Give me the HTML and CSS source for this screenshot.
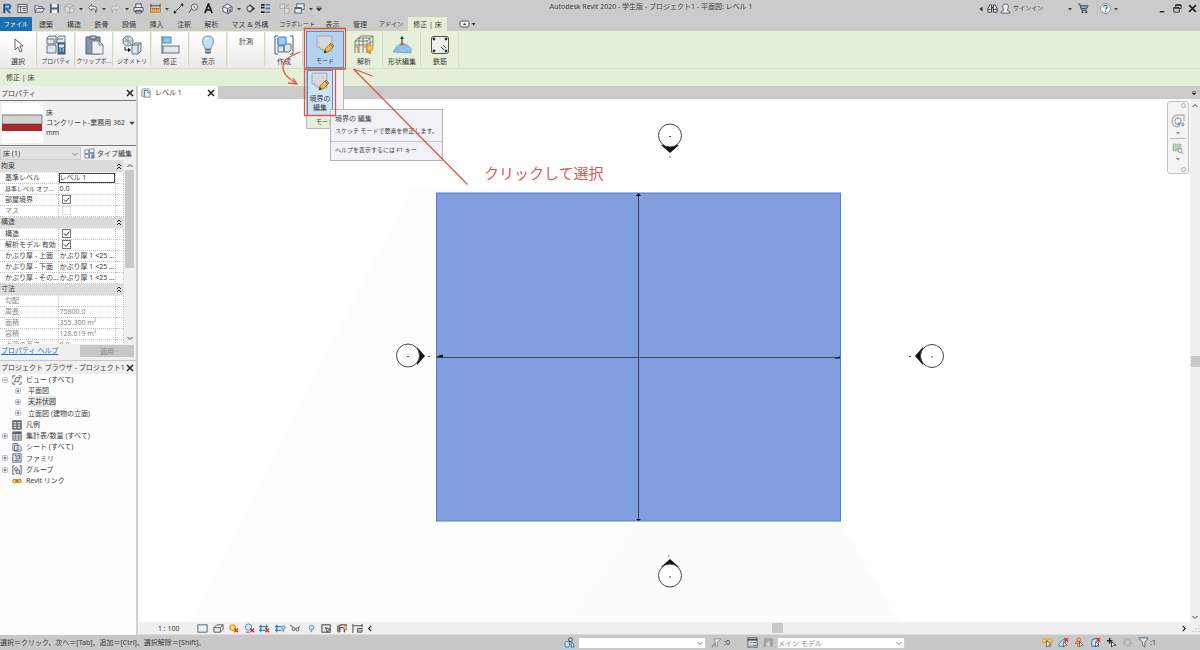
FILE: index.html
```html
<!DOCTYPE html>
<html lang="ja">
<head>
<meta charset="utf-8">
<title>Autodesk Revit 2020 - プロジェクト1</title>
<link rel="stylesheet" href="styles.css">
</head>
<body>
<svg class="sprite" aria-hidden="true">
  <symbol id="caret" viewBox="0 0 6 6"><path d="M1 2h4L3 4.500z" fill="#444"/></symbol>
  <symbol id="close" viewBox="0 0 8 8"><path d="M1 1l6 6M7 1L1 7" stroke="#222" stroke-width="1.500" fill="none"/></symbol>
  <symbol id="chev" viewBox="0 0 8 8"><path d="M1.500 3L4 5.500 6.500 3" stroke="#777" fill="none"/></symbol>
  <symbol id="dbl" viewBox="0 0 6 8"><path d="M1 4l2-2 2 2M1 7l2-2 2 2" stroke="#222" stroke-width="1" fill="none"/></symbol>
  <symbol id="sketch" viewBox="0 0 20 20"><path d="M2 1h15v15H8v-2H5v-2H2z" fill="#d4d7db" stroke="#9a9fa6" stroke-width=".8"/><path d="M9 18l1-4 6-6 3 3-6 6z" fill="#f5b941" stroke="#765c35" stroke-width=".7"/><path d="M9 18l1-3 2 2z" fill="#333"/><path d="M15 9l3 3" stroke="#d9653c" stroke-width="1.500"/></symbol>
  <symbol id="views" viewBox="0 0 12 12"><path d="M1 3q0-2 2-2h3v2H4v7H1zM4 3h4l3 3v5H4zM7 1h2l2 2v2" fill="#eef3f7" stroke="#617386" stroke-width=".9"/><path d="M8 3v3h3" stroke="#617386" fill="none" stroke-width=".9"/></symbol>
  <symbol id="types" viewBox="0 0 12 12"><path d="M1 2h4v4H1zM6 1h5v4H6zM1 7h4v4H1zM6 6h5v5H6z" fill="#eef3f7" stroke="#617386" stroke-width=".8"/><path d="M8 7h3v4H8z" fill="#4b91cc"/></symbol>
  <symbol id="redx" viewBox="0 0 6 6"><path d="M1 1l4 4M5 1L1 5" stroke="#df3529" stroke-width="1.600"/></symbol>
  <symbol id="plus" viewBox="0 0 6 6"><rect x=".5" y=".5" width="5" height="5" rx="1" fill="#f4f6f8" stroke="#a3a9b0" stroke-width=".7"/><path d="M1.500 3h3M3 1.500v3" stroke="#3c5d91" stroke-width=".8"/></symbol>
  <symbol id="minus" viewBox="0 0 6 6"><rect x=".5" y=".5" width="5" height="5" rx="1" fill="#f4f6f8" stroke="#a3a9b0" stroke-width=".7"/><path d="M1.500 3h3" stroke="#3c5d91" stroke-width=".8"/></symbol>
</svg>

<header class="titlebar">
  <nav class="quick" aria-label="クイック アクセス">
    <button class="qi" aria-label="Revit"><svg viewBox="0 0 12 12"><path d="M1.500 1h2v10h-2z" fill="#153f75"/><path d="M3 2h4a2 2 0 0 1 0 4H4l5 5" stroke="#2473b8" stroke-width="2.200" fill="none"/></svg></button>
    <button class="qi" aria-label="ホーム"><svg viewBox="0 0 12 12"><rect x="1" y="1.500" width="10" height="9" fill="#eee" stroke="#4b5967"/><path d="M1 4h10M4 4v6M6 6h4M6 8h4" stroke="#4b5967"/></svg></button>
    <button class="qi gap-s" aria-label="開く"><svg viewBox="0 0 12 12"><path d="M1 10V3h3l1 1h4v2M1 10l2-4h8.500L9 10z" fill="#e4e7ea" stroke="#4b5967"/></svg></button>
    <button class="qi" aria-label="保存"><svg viewBox="0 0 12 12"><path d="M1 1h9l1 1v9H1z" fill="#536170"/><path d="M3 1h6v4H3zM3 7h6v4H3z" fill="#eee"/></svg></button>
    <button class="qi" aria-label="同期"><svg viewBox="0 0 12 12"><path d="M1 3l5-2 5 2v6l-5 2-5-2zM1 3l5 2 5-2M6 5v6" fill="#ddd" stroke="#aaa"/><circle cx="8.500" cy="8" r="2.500" fill="#ddd" stroke="#aaa"/></svg></button>
    <button class="qc" aria-label="同期メニュー"><svg><use href="#caret"/></svg></button>
    <button class="qi" aria-label="元に戻す"><svg viewBox="0 0 12 12"><path d="M5 1.500L1.500 5 5 8.500V6.500h3q2 0 1.500 4 3-6-1.500-7H5z" fill="#eee" stroke="#4b5967" stroke-width=".9"/></svg></button>
    <button class="qc" aria-label="履歴"><svg><use href="#caret"/></svg></button>
    <button class="qi" aria-label="やり直し"><svg viewBox="0 0 12 12"><path d="M7 1.500L10.500 5 7 8.500V6.500H4q-2 0-1.500 4-3-6 1.500-7h3z" fill="#ddd" stroke="#aaa" stroke-width=".9"/></svg></button>
    <button class="qc" aria-label="やり直し履歴"><svg><use href="#caret"/></svg></button>
    <button class="qi" aria-label="印刷"><svg viewBox="0 0 12 12"><path d="M3 5V1h6v4M1 5h10v4H1zM3 8h6v3H3z" fill="#eee" stroke="#404c58"/></svg></button>
    <button class="qi gap-s" aria-label="計測"><svg viewBox="0 0 12 12"><path d="M1 1v4M11 1v4M1 3h10" stroke="#444"/><path d="M.5 6h11v4H.5z" fill="#f3b94a" stroke="#b3762b"/><path d="M3 6v2M5 6v2M7 6v2M9 6v2" stroke="#d6402d" stroke-width=".7"/></svg></button>
    <button class="qc" aria-label="計測メニュー"><svg><use href="#caret"/></svg></button>
    <button class="qi" aria-label="寸法"><svg viewBox="0 0 12 12"><path d="M2 10l8-8" stroke="#333"/><path d="M1 9l2 2M9 1l2 2" stroke="#333" stroke-width="2.500"/></svg></button>
    <button class="qi" aria-label="タグ"><svg viewBox="0 0 12 12"><circle cx="7" cy="4.500" r="3.500" fill="#e8e8e8" stroke="#555"/><path d="M4 6l-3 5M6 3l2 3" stroke="#555"/></svg></button>
    <button class="qi" aria-label="文字"><svg viewBox="0 0 12 12"><path d="M2 11L6 1l4 10M3.500 7.500h5" stroke="#222" stroke-width="1.900" fill="none"/></svg></button>
    <button class="qi gap-m" aria-label="3D ビュー"><svg viewBox="0 0 12 12"><path d="M1 4l5-3 5 3v5l-5 2.500L1 9z" fill="#eee" stroke="#4b5967"/><path d="M1 4l5 2 5-2M6 6v5" stroke="#4b5967" fill="none"/><path d="M7 7l3-1v3l-3 1z" fill="#777"/></svg></button>
    <button class="qc" aria-label="3D メニュー"><svg><use href="#caret"/></svg></button>
    <button class="qi" aria-label="断面"><svg viewBox="0 0 12 12"><path d="M5 1l6 5-6 5z" fill="#333"/><circle cx="5" cy="6" r="3" fill="#ddd" stroke="#333"/></svg></button>
    <button class="qi" aria-label="細線"><svg viewBox="0 0 12 12"><path d="M1 2h4M1 5h4M1 10h4" stroke="#222" stroke-width="2"/><path d="M6 2h5M6 10h5" stroke="#333"/><path d="M6 6h5" stroke="#3184c5" stroke-width="2"/></svg></button>
    <button class="qi gap-m" aria-label="非表示を閉じる"><svg viewBox="0 0 12 12"><path d="M1 1h5v5H1zM6 6h5v5H6z" fill="#ddd" stroke="#aaa"/><path d="M7 1l4 4M11 1L7 5" stroke="#aaa"/></svg></button>
    <button class="qi" aria-label="切り替え"><svg viewBox="0 0 12 12"><rect x="3" y="1" width="8" height="6" fill="#eee" stroke="#4b5967"/><rect x="1" y="5" width="7" height="6" fill="#eee" stroke="#4b5967"/><path d="M1 6h7" stroke="#4b5967"/></svg></button>
    <button class="qc" aria-label="ウィンドウ"><svg><use href="#caret"/></svg></button>
    <button class="qc" aria-label="カスタマイズ"><svg viewBox="0 0 6 6"><path d="M.5 1h5M.5 2.500h5L3 5z" fill="#333" stroke="#333" stroke-width=".6"/></svg></button>
  </nav>
  <h1 class="title">Autodesk Revit 2020 - 学生版 - プロジェクト1 - 平面図: レベル 1</h1>
  <div class="account">
    <button class="qc" aria-label="折りたたむ"><svg viewBox="0 0 6 6"><path d="M4.500.5v5L1.500 3z" fill="#333"/></svg></button>
    <button class="qi" aria-label="検索"><svg viewBox="0 0 12 12"><path d="M1 10V6l2-4h2v8zM7 10V2h2l2 4v4z" fill="#eee" stroke="#333"/><path d="M5 5h2M1 7h4M7 7h4" stroke="#333"/></svg></button>
    <button class="signin"><svg viewBox="0 0 12 12"><path d="M1 11q0-2 3-3-3-7 2-7t2 7q3 1 3 3z" fill="#eee" stroke="#4b5967"/></svg>サインイン</button>
    <button class="qc" aria-label="アカウント"><svg><use href="#caret"/></svg></button>
    <button class="qi cart" aria-label="ストア"><svg viewBox="0 0 12 12"><path d="M0 1h2l2 7h6M2.500 3h8.500L9.500 6h-6z" fill="#8aa6bf" stroke="#314c68"/><circle cx="5" cy="10" r="1"/><circle cx="9" cy="10" r="1"/></svg></button>
    <button class="qi help" aria-label="ヘルプ"><svg viewBox="0 0 12 12"><circle cx="6" cy="6" r="5.300" fill="#fff" stroke="#526577" stroke-width=".8"/><path d="M4 4.500q0-2 2-2t2 1.700T6 7" stroke="#2467c4" stroke-width="1.400" fill="none"/><circle cx="6" cy="9" r=".8" fill="#2467c4"/></svg></button>
    <button class="qc" aria-label="ヘルプ メニュー"><svg><use href="#caret"/></svg></button>
    <div class="winbtns">
      <button class="qi" aria-label="最小化"><svg viewBox="0 0 12 12"><path d="M3 9.500h5" stroke="#222" stroke-width="1.500"/></svg></button>
      <button class="qi" aria-label="元のサイズ"><svg viewBox="0 0 12 12"><path d="M4 4.500V2h6v4H8M2 5h6v5H2z" fill="none" stroke="#333"/><path d="M4 2.500h6M2 5.500h6" stroke="#333" stroke-width="1.500"/></svg></button>
      <button class="qi" aria-label="閉じる"><svg><use href="#close"/></svg></button>
    </div>
  </div>
</header>

<nav class="tabs" aria-label="リボン タブ">
  <button class="tab file kana">ファイル</button>
  <button class="tab">建築</button><button class="tab">構造</button><button class="tab">鉄骨</button><button class="tab">設備</button><button class="tab">挿入</button><button class="tab">注釈</button><button class="tab">解析</button><button class="tab">マス &amp; 外構</button><button class="tab kana">コラボレート</button><button class="tab">表示</button><button class="tab">管理</button><button class="tab kana">アドイン</button><button class="tab active">修正 | 床</button>
  <button class="tab" aria-label="リボン表示"><svg class="ribmin" viewBox="0 0 18 8"><rect x="1" y="1" width="9" height="6" rx="1.500" fill="#eee" stroke="#555"/><path d="M4 5l1.500-2L7 5z" fill="#333"/><path d="M12.500 3h4l-2 2.500z" fill="#333"/></svg></button>
</nav>

<section class="ribbon" aria-label="リボン">
  <button class="panel"><svg viewBox="0 0 20 20"><path d="M7 4v11l3-3 2 5 2-1-2-5h3z" fill="#fff" stroke="#555" stroke-width=".9"/></svg><span>選択</span></button>
  <button class="panel"><svg viewBox="0 0 20 20"><path d="M1 3l2-2h7v8H1zM11 3l2-2h6v7h-8zM1 11l2-1h7v8H1z" fill="#dfe7ee" stroke="#667684"/><path d="M1 4h7v5M11 4h6" stroke="#667684" fill="none"/><rect x="12" y="8" width="7" height="11" fill="#3c6ba0" stroke="#456"/><path d="M13.500 10h4v2h-4zM13.500 14h1.500M16.500 14H18M13.500 16H15M16.500 16H18" fill="#dbe9f5" stroke="#dbe9f5"/></svg><span class="kana">プロパティ</span></button>
  <button class="panel"><svg viewBox="0 0 20 20"><path d="M2 2h14v17H2z" fill="#8796a4" stroke="#536170"/><path d="M6 1h6v3H6z" fill="#bcc5ce" stroke="#536170"/><path d="M8 6h7l4 4v9H8z" fill="#eef1f4" stroke="#717e8b"/><path d="M15 6v4h4" fill="none" stroke="#717e8b"/></svg><span class="kana">クリップボ...</span></button>
  <button class="panel"><svg viewBox="0 0 20 20"><circle cx="6" cy="6" r="5" fill="#d9dfe5" stroke="#687885"/><path d="M1 6h9M6 1v9M3 3l6 6" stroke="#8998a5"/><path d="M10 10l3-2h6v8l-3 3h-6z" fill="#dce5ed" stroke="#657686"/><path d="M10 10h6v9M16 10l3-2" fill="none" stroke="#657686"/><path d="M3 12v3h4" fill="none" stroke="#222"/><path d="M6 13l3 2-3 2z"/></svg><span class="kana">ジオメトリ</span></button>
  <button class="panel"><svg viewBox="0 0 20 20"><path d="M2 1v18" stroke="#53616e"/><rect x="3" y="2" width="8" height="6" fill="#91c8ef" stroke="#418bc4"/><rect x="3" y="11" width="16" height="7" fill="#e5e7ea" stroke="#687580"/></svg><span>修正</span></button>
  <button class="panel"><svg viewBox="0 0 20 20"><path d="M7 14q0-3-2-5-2-8 5-8t5 8q-2 2-2 5z" fill="#c3def2" stroke="#7393ac"/><path d="M7 14h6v4l-3 1-3-1z" fill="#667480"/><path d="M7 16h6" stroke="#dce2e7"/><path d="M7 6q1-3 4-3" stroke="#fff" fill="none"/></svg><span>表示</span></button>
  <button class="panel plain"><span>計測</span></button>
  <button class="panel"><svg viewBox="0 0 20 20"><path d="M4 1H1v18h3M16 1h3v18h-3" fill="none" stroke="#4d5b68"/><path d="M4 3h7v7H4zM4 11h6v6H4zM10 11l2-2h5v6l-2 2h-5z" fill="#dbe4eb" stroke="#627588"/><path d="M4 3l1-1h7v7l-1 1H4z" fill="#9dcdf0" stroke="#3b86bf"/></svg><span>作成</span></button>
  <div class="mode">
    <button class="panel open" aria-expanded="true"><svg><use href="#sketch"/></svg><span class="kana">モード</span></button>
    <div class="flyout">
      <button class="edit"><svg><use href="#sketch"/></svg><span>境界の<br>編集</span></button>
      <div class="flyname kana">モード</div>
    </div>
    <div class="tooltip" role="tooltip">
      <b>境界の 編集</b>
      <p>スケッチ モードで要素を修正します。</p>
      <p class="f1">ヘルプを表示するには F1 キー</p>
    </div>
  </div>
  <button class="panel green"><svg viewBox="0 0 20 20"><path d="M1 6l6-5h12v10l-5 7M1 6h12l6-5M1 6v12M13 6v12M1 10h12l6-4M5 3v15M9 3v15M16 4v10M4 3h12" fill="none" stroke="#666" stroke-width=".8"/><path d="M1 12h3v6M9 12h4v6" stroke="#e16a50" fill="none"/><circle cx="16" cy="13" r="3" fill="#f6c945" stroke="#dd9c28"/><path d="M15 16h2v3h-2z" fill="#c69336"/></svg><span>解析</span></button>
  <button class="panel green"><svg viewBox="0 0 20 20"><path d="M1 17l4-6 5-3 5 2 4 3v5z" fill="#8bbce5" stroke="#6fa6d8" stroke-width=".8"/><path d="M5 11l5 5 9-3M10 8v8" stroke="#b7d8f2" fill="none" stroke-width=".8"/><path d="M10 2v6" stroke="#333"/><path d="M8 4l2-3 2 3z" fill="#333"/><circle cx="10" cy="9" r="1.500" fill="#e34d3c"/></svg><span>形状編集</span></button>
  <button class="panel green"><svg viewBox="0 0 20 20"><rect x="1.500" y="1.500" width="17" height="17" rx="2" fill="#eef2e9" stroke="#555"/><g fill="#333"><circle cx="4" cy="4" r="1.400"/><circle cx="16" cy="4" r="1.400"/><circle cx="4" cy="16" r="1.400"/><circle cx="16" cy="16" r="1.400"/></g><path d="M11 12l3 3M13 10l3 3" stroke="#444"/></svg><span>鉄筋</span></button>
</section>
<div class="options">修正 | 床</div>

<main class="work">
  <aside class="side">
    <section class="props">
      <header class="palhead"><h2>プロパティ</h2><button aria-label="プロパティを閉じる"><svg><use href="#close"/></svg></button></header>
      <button class="type">
        <svg class="swatch" viewBox="0 0 42 40" preserveAspectRatio="none"><path d="M0 0h42v40H0z" fill="#fff"/><path d="M0 12h41v9H0z" fill="#d3d5d5" stroke="#777"/><path d="M0 21h41v7H0z" fill="#a52928"/></svg>
        <span class="typename">床<br>コンクリート-業務用 362<br>mm</span>
        <svg class="car"><use href="#caret"/></svg>
      </button>
      <div class="filter">
        <label class="sel grow"><select aria-label="要素"><option>床 (1)</option></select><svg><use href="#chev"/></svg></label>
        <button class="edittype"><svg><use href="#types"/></svg>タイプ編集</button>
      </div>
      <div class="gridwrap">
        <table class="grid">
          <colgroup><col class="c1"><col><col class="c3"></colgroup>
          <tr class="grp"><th colspan="2">拘束</th><td><svg><use href="#dbl"/></svg></td></tr>
          <tr><th>基準レベル</th><td class="editing"><input class="edit-in" type="text" value="レベル 1" aria-label="基準レベル"></td><td></td></tr>
          <tr><th class="kana">基準レベル オフ...</th><td>0.0</td><td></td></tr>
          <tr><th><label for="room">部屋境界</label></th><td><input id="room" type="checkbox" checked></td><td></td></tr>
          <tr class="dim"><th><label for="mass">マス</label></th><td><input id="mass" type="checkbox" disabled></td><td></td></tr>
          <tr class="grp"><th colspan="2">構造</th><td><svg><use href="#dbl"/></svg></td></tr>
          <tr><th><label for="str">構造</label></th><td><input id="str" type="checkbox" checked></td><td></td></tr>
          <tr><th><label for="ana">解析モデル 有効</label></th><td><input id="ana" type="checkbox" checked></td><td></td></tr>
          <tr><th>かぶり厚 - 上面</th><td>かぶり厚 1 &lt;25 ...</td><td></td></tr>
          <tr><th>かぶり厚 - 下面</th><td>かぶり厚 1 &lt;25 ...</td><td></td></tr>
          <tr><th>かぶり厚 - その...</th><td>かぶり厚 1 &lt;25 ...</td><td></td></tr>
          <tr class="grp"><th colspan="2">寸法</th><td><svg><use href="#dbl"/></svg></td></tr>
          <tr class="dim"><th>勾配</th><td></td><td></td></tr>
          <tr class="dim"><th>周長</th><td>75800.0</td><td></td></tr>
          <tr class="dim"><th>面積</th><td>355.300 m²</td><td></td></tr>
          <tr class="dim"><th>容積</th><td>128.619 m³</td><td></td></tr>
          <tr class="dim"><th>上部の高さ</th><td>0.0</td><td></td></tr>
        </table>
        <div class="vscroll"><svg class="up"><use href="#chev"/></svg><i></i><svg><use href="#chev"/></svg></div>
      </div>
      <footer class="apply"><a href="#help">プロパティ ヘルプ</a><button disabled>適用</button></footer>
    </section>
    <section class="browser">
      <header class="palhead"><h2>プロジェクト ブラウザ - プロジェクト1</h2><button aria-label="ブラウザを閉じる"><svg><use href="#close"/></svg></button></header>
      <ul class="tree">
        <li><svg class="ex"><use href="#minus"/></svg><svg class="ti" viewBox="0 0 12 12"><path d="M1 4V1h3M8 1h3v3M1 8v3h3M8 11h3V8" stroke="#555" fill="none"/><path d="M5 3h4L8 8H3z" fill="#eee" stroke="#555"/></svg><span>ビュー (すべて)</span></li>
        <li class="sub"><svg class="ex"><use href="#plus"/></svg><span>平面図</span></li>
        <li class="sub"><svg class="ex"><use href="#plus"/></svg><span class="hot">天井伏図</span></li>
        <li class="sub"><svg class="ex"><use href="#plus"/></svg><span>立面図 (建物の立面)</span></li>
        <li><i class="ex"></i><svg class="ti" viewBox="0 0 12 12"><rect x="1" y="1" width="10" height="10" fill="#6b7783" stroke="#444"/><path d="M2 3h3M2 6h3M2 9h3M7 3h3M7 6h3M7 9h3" stroke="#e2e8ed" stroke-width="1.500"/></svg><span>凡例</span></li>
        <li><svg class="ex"><use href="#plus"/></svg><svg class="ti" viewBox="0 0 12 12"><rect x="1" y="1" width="10" height="10" fill="#eee" stroke="#555"/><path d="M1 2.500h10" stroke="#4b6078" stroke-width="2.500"/><path d="M1 6h10M1 8.500h10M4 3v8M8 3v8" stroke="#777"/></svg><span>集計表/数量 (すべて)</span></li>
        <li><i class="ex"></i><svg class="ti" viewBox="0 0 12 12"><path d="M1 2h6v8H1zM3 4h6l2 2v5H3z" fill="#eef1f4" stroke="#536577"/><path d="M5 7h4M5 9h4" stroke="#89a"/></svg><span>シート (すべて)</span></li>
        <li><svg class="ex"><use href="#plus"/></svg><svg class="ti" viewBox="0 0 12 12"><path d="M1 1h10v10H1z" fill="#eee" stroke="#555"/><path d="M3 3h2v4h4V3H7v2M3 9h6" stroke="#355f88" fill="none"/></svg><span>ファミリ</span></li>
        <li><svg class="ex"><use href="#plus"/></svg><svg class="ti" viewBox="0 0 12 12"><path d="M3 1H1v10h2M9 1h2v10H9" fill="none" stroke="#444"/><circle cx="5" cy="5" r="2" fill="#ddd" stroke="#567"/><path d="M5 6h4v4H5z" fill="#ddd" stroke="#567"/></svg><span>グループ</span></li>
        <li><i class="ex"></i><svg class="ti" viewBox="0 0 12 12"><rect x="1" y="4" width="5" height="4" rx="2" fill="#f8d547" stroke="#dc8c18" stroke-width="1.300"/><rect x="6" y="4" width="5" height="4" rx="2" fill="#f8d547" stroke="#dc8c18" stroke-width="1.300"/><path d="M4 6h4" stroke="#a43b20"/></svg><span>Revit リンク</span></li>
      </ul>
    </section>
  </aside>

  <section class="view">
    <div class="doctabs"><div class="doctab"><svg class="di"><use href="#views"/></svg><span>レベル 1</span><button aria-label="ビューを閉じる"><svg><use href="#close"/></svg></button></div><button class="more" aria-label="タブ一覧"><svg viewBox="0 0 6 6"><path d="M1 1.500h4M1 3h4L3 5z" fill="#333" stroke="#333" stroke-width=".5"/></svg></button></div>
    <div class="stage">
      <div class="canvas">
        <svg class="drawing" viewBox="138 99 1052 523" preserveAspectRatio="xMidYMid meet">
          <path d="M410 190h100l210 432H190z" fill="#fdfdfe"/><path d="M640 521h200l60 101H570z" fill="#fcfcfd"/>
          <rect x="436.500" y="193" width="404" height="328" fill="#819fdf" stroke="#557cd2"/>
          <path d="M638.500 194v326M437 357.500h403" stroke="#3c465c"/>
          <path d="M436 356.500l7-2v3zM834 358.500l6-2v2zM636 196l2.500-3 2.500 3zM636 519h5l-2.500 2z" fill="#111"/>
          <g fill="#111"><path d="M661 145h18l-9 8z"/><path d="M417 347v18l8-9z"/><path d="M923 347v18l-8-9z"/><path d="M661 567h18l-9-8z"/></g>
          <g fill="#fff" stroke="#444"><circle cx="670" cy="135.500" r="11.500"/><circle cx="408" cy="355.500" r="11.500"/><circle cx="932" cy="356" r="11.500"/><circle cx="670" cy="575.500" r="11.500"/></g>
          <path d="M669 136.500h2M669 157h1.500M407 356.500h2M428 356.500h2M931 357h2M909 356.500h2M669 577h2M668 556h1.500" stroke="#555"/>
        </svg>
        <div class="navbar">
          <i class="dot"></i>
          <svg class="wheel" viewBox="0 0 16 16"><path d="M14 8V2H8a6 6 0 1 0 0 12" fill="none" stroke="#b0b0b0" stroke-width="1.300"/><circle cx="8" cy="8" r="3" fill="none" stroke="#aaa" stroke-width="1.300"/><path d="M8 10h2v1.500H8V13h2M12 10v3h1q2-1 0-3z" stroke="#5b9bd3" fill="none"/></svg>
          <svg class="nc"><use href="#caret"/></svg><hr>
          <svg class="zoomi" viewBox="0 0 12 12"><path d="M1 1h8v7H1z" fill="#b9cdb0" stroke="#90a387" stroke-dasharray="1"/><circle cx="8" cy="7.500" r="2" fill="#eef" stroke="#899"/><path d="M9.500 9l2 2" stroke="#899"/></svg>
          <svg class="nc"><use href="#caret"/></svg>
          <i class="dot end"></i>
        </div>
      </div>
      <div class="vscroll main"><svg class="up"><use href="#chev"/></svg><i></i><svg><use href="#chev"/></svg></div>
    </div>
    <div class="viewbar">
      <span class="scale">1 : 100</span>
      <button aria-label="詳細"><svg viewBox="0 0 12 12"><rect x="1" y="2" width="10" height="8" fill="#eef2f5" stroke="#4d5f70"/></svg></button>
      <button aria-label="表示スタイル"><svg viewBox="0 0 12 12"><path d="M1 5l3-3h7v5l-3 3H1zM1 5h7v5M8 5l3-3" fill="#eee" stroke="#555"/></svg></button>
      <button aria-label="太陽"><svg viewBox="0 0 12 12"><circle cx="5" cy="5" r="3" fill="#fbe17a" stroke="#e3a226" stroke-width="1.500"/><use href="#redx" x="6" y="5" width="6" height="6"/></svg></button>
      <button aria-label="影"><svg viewBox="0 0 12 12"><circle cx="5" cy="4.500" r="3.500" fill="#d4e6f5" stroke="#418bc4"/><path d="M2 10h4" stroke="#555"/><use href="#redx" x="6" y="5" width="6" height="6"/></svg></button>
      <button aria-label="トリミング"><svg viewBox="0 0 12 12"><path d="M0 4h10M2 2v8M0 8h7M8 2v5" stroke="#3c83ba" stroke-width="1.500"/><use href="#redx" x="6" y="5" width="6" height="6"/></svg></button>
      <button aria-label="トリミング領域"><svg viewBox="0 0 12 12"><path d="M0 4h7M2 2v8M0 8h7" stroke="#3c83ba" stroke-width="1.500"/><circle cx="9" cy="5" r="2" fill="#d4e6f5" stroke="#418bc4"/><path d="M9 7v3" stroke="#555"/></svg></button>
      <button aria-label="一時表示"><svg viewBox="0 0 12 12"><path d="M0 3q2-1 3 2M11 3l-3 3" stroke="#555" fill="none"/><circle cx="4" cy="6.500" r="1.700" fill="#eee" stroke="#555"/><circle cx="8" cy="7" r="1.700" fill="#eee" stroke="#555"/></svg></button>
      <button aria-label="非表示要素"><svg viewBox="0 0 12 12"><circle cx="6" cy="5" r="2.500" fill="#d4e9fb" stroke="#3f92d6"/><path d="M6 8v2" stroke="#3f92d6" stroke-width="1.500"/></svg></button>
      <button aria-label="ビュー プロパティ"><svg viewBox="0 0 12 12"><rect x="1" y="2" width="9" height="8" fill="#eee" stroke="#333"/><path d="M5 5l5 2-2 1-1 2z" fill="#fff" stroke="#333"/></svg></button>
      <button aria-label="解析モデル"><svg viewBox="0 0 12 12"><path d="M1 10V4l3-2h6v6M3 10V5h5v5" fill="none" stroke="#555" stroke-width="1.500"/><circle cx="9" cy="5" r="2" fill="#f2bd3e"/><path d="M2 7v3" stroke="#e34d3c"/></svg></button>
      <button aria-label="拘束"><svg viewBox="0 0 12 12"><path d="M1 1v10M1 3h10M11 1v4" stroke="#444" fill="none"/><path d="M6 6h5v4H6z" fill="#bbb" stroke="#555"/></svg></button>
      <svg class="lt" viewBox="0 0 8 8"><path d="M5.500 1L2.500 4l3 3" stroke="#222" fill="none" stroke-width="1.300"/></svg>
      <div class="hscroll"><i></i></div>
      <svg class="lt" viewBox="0 0 8 8"><path d="M2.500 1l3 3-3 3" stroke="#222" fill="none" stroke-width="1.300"/></svg>
      <svg class="grip" viewBox="0 0 8 8"><path d="M7 1v1M7 4v1M7 7v1M4 4v1M4 7v1M1 7v1" stroke="#aaa"/></svg>
    </div>
  </section>
</main>

<footer class="status">
  <span class="msg">選択＝クリック、次へ＝[Tab]、追加＝[Ctrl]、選択解除＝[Shift]。</span>
  <svg class="si" viewBox="0 0 12 12"><circle cx="7" cy="3" r="2" fill="#ddd" stroke="#333"/><rect x="1" y="5" width="5" height="6" rx="2" fill="#cfe5f7" stroke="#2b78b4"/><path d="M8 5q3 1 3 6H8z" fill="#cfe5f7" stroke="#2b78b4"/></svg>
  <label class="sel combo"><select aria-label="ワークセット"><option></option></select><svg><use href="#chev"/></svg></label>
  <svg class="si" viewBox="0 0 12 12"><path d="M3 2h8L7 6v4H5V6z" fill="#ddd" stroke="#999"/><path d="M1 11l4-4" stroke="#999" stroke-width="2"/></svg><span class="zero">:0</span>
  <svg class="si" viewBox="0 0 12 12"><rect x="1" y="1" width="10" height="10" fill="#eee" stroke="#445566"/><path d="M1 3h10" stroke="#445566" stroke-width="2"/><path d="M3 6h2M6 6h4M3 9h2M6 9h4" stroke="#445566"/></svg>
  <svg class="si" viewBox="0 0 12 12"><path d="M2 2h8v8H8V6L3 10H1z" fill="#aaa" stroke="#999"/><path d="M3 8l4-4v6z" fill="#ddd"/></svg>
  <label class="sel combo"><select aria-label="デザイン オプション"><option>メイン モデル</option></select><svg><use href="#chev"/></svg></label>
  <div class="sicons">
    <svg class="si" viewBox="0 0 12 12"><rect x="0" y="2" width="5" height="4" rx="2" fill="#f8d547" stroke="#dc8c18"/><rect x="6" y="2" width="5" height="4" rx="2" fill="#f8d547" stroke="#dc8c18"/><path d="M5 4v7l2-2 1 2 1-1-1-2h2z" fill="#fff" stroke="#333" stroke-width=".7"/></svg>
    <svg class="si" viewBox="0 0 12 12"><path d="M1 8l4-5h4L7 10H1z" fill="#cfe5f7" stroke="#2b78b4"/><use href="#redx" x="6" width="6" height="6"/><path d="M6 5v6l2-2h2z" fill="#fff" stroke="#333" stroke-width=".7"/></svg>
    <svg class="si" viewBox="0 0 12 12"><circle cx="5" cy="3" r="2" fill="#f3b27e" stroke="#d3672d"/><path d="M1 7h7l-1-2H3zM4 7v4" fill="#f3b27e" stroke="#d3672d"/><path d="M6 5v6l2-2h2z" fill="#fff" stroke="#333" stroke-width=".7"/></svg>
    <svg class="si" viewBox="0 0 12 12"><path d="M2 4l2-2h5v8H2z" fill="#d7eafa" stroke="#2b88d4" stroke-width="1.300"/><use href="#redx" x="6" width="6" height="6"/><path d="M6 5v6l2-2h2z" fill="#fff" stroke="#333" stroke-width=".7"/></svg>
    <svg class="si" viewBox="0 0 12 12"><path d="M1 4h6M4 1v6" stroke="#222" stroke-width="1.600"/><path d="M6 5v6l2-2h3z" fill="#fff" stroke="#333"/></svg>
    <svg class="si" viewBox="0 0 12 12"><circle cx="6" cy="6" r="4" fill="none" stroke="#aaa" stroke-width="2" stroke-dasharray="2 1"/><circle cx="6" cy="6" r="3" fill="#ccc" stroke="#aaa"/></svg>
    <svg class="si" viewBox="0 0 12 12"><path d="M1 1h10L7.500 6v5L5 9V6z" fill="#e3e8ec" stroke="#526577"/></svg><span class="one">:1</span>
  </div>
</footer>

<div class="markup">
  <svg viewBox="0 0 620 200"><g fill="none" stroke="#e0564b" stroke-width="1.300"><path d="M304.500 28.500h41v40.500h-41zM304.500 69h31v46.500h-31z"/><path d="M300 52c-12 5-17 8-17 15s5 11 14 17M288 83l9 1-4-6M467.500 184.500L353.500 69l19 7"/></g></svg>
  <p>クリックして選択</p>
</div>
</body>
</html>
```

FILE: styles.css
```css
* { box-sizing: border-box; }
body { margin: 0; height: 100vh; display: flex; flex-direction: column; overflow: hidden; position: relative; background: #cbcbcb; color: #3c3c3c; font-family: "Noto Sans", "Noto Sans CJK JP", sans-serif; font-size: 7px; line-height: 11px; }
button, select, input { font: inherit; color: inherit; border: 0; padding: 0; margin: 0; background: none; border-radius: 0; }
h1, h2, p, ul { margin: 0; padding: 0; font-size: inherit; font-weight: normal; }
svg { display: block; }
.sprite { position: absolute; width: 0; height: 0; }
.kana, .grid th.kana { font-size: 6px; }

.titlebar { height: 17px; flex: none; display: grid; grid-template-columns: 325px 1fr 223px; align-items: center; }
.quick, .account { display: flex; align-items: center; }
.qi { flex: none; width: 15px; height: 15px; display: flex; align-items: center; justify-content: center; }
.qi svg, .signin svg { width: 11px; height: 11px; }
.qc { flex: none; width: 8px; height: 15px; display: flex; align-items: center; justify-content: center; }
.qc svg { width: 6px; height: 6px; }
.gap-s { margin-left: 2px; }
.gap-m { margin-left: 4px; }
.title { text-align: center; white-space: nowrap; color: #444; line-height: 12px; padding-bottom: 3px; }
.signin { display: flex; align-items: center; gap: 2px; width: 66px; font-size: 6px; }
.cart { margin-left: 2px; }
.help { margin-left: 6px; border-left: 1px solid #bbb; }
.winbtns { margin-left: auto; display: flex; }
.winbtns .qi:last-child svg { width: 9px; height: 9px; }

.tabs { flex: none; height: 14px; display: grid; grid-template-columns: 32px 28px 28px 27px 28px 27px 28px 27px 50px 44px 27px 28px 34px 39px 42px; }
.tab { white-space: nowrap; display: flex; align-items: center; justify-content: center; min-width: 0; }
.tab.file { background: #1b6fb0; color: #fff; }
.tab.active { background: #e3efd6; }
.ribmin { width: 18px; height: 8px; }

.ribbon { flex: none; height: 38px; display: flex; gap: 2px; background: #e3efd6; border-bottom: 1px solid #d3ddc9; padding: 1px 0; }
.panel { flex: none; width: 36px; display: flex; flex-direction: column; align-items: center; justify-content: space-between; padding: 3px 0 0; background: linear-gradient(#fff, #ececec); box-shadow: 1px 0 0 #d5d9d0; white-space: nowrap; }
.panel svg { width: 20px; height: 20px; }
.panel.plain { padding-top: 4px; }
.panel.green { background: #e6f0da; box-shadow: 1px 0 0 #d5dec8; }
.mode { position: relative; flex: none; width: 40px; padding-left: 3px; display: flex; }
.panel.open { background: #b4d3f0; box-shadow: 0 0 0 1px #5a8abb; }
.flyout { position: absolute; left: 2px; top: 37px; width: 38px; background: #f1f1f1; border: 1px solid #b8b8b8; z-index: 2; }
.edit { display: flex; flex-direction: column; align-items: center; gap: 2px; width: 26px; height: 46px; padding: 1px 0; background: #cfe3f6; border: 1px solid #478bd0; line-height: 9px; }
.edit svg { width: 20px; height: 20px; flex: none; }
.flyname { margin-top: 2px; height: 10px; line-height: 9px; background: #e3efd6; text-align: center; }
.tooltip { position: absolute; left: 26px; top: 77px; z-index: 3; width: max-content; background: #f1f2f7; border: 1px solid #b5b5b8; padding: 3px 0; white-space: nowrap; color: #444; }
.tooltip b { display: block; padding: 0 4px; line-height: 12px; font-weight: normal; }
.tooltip p { padding: 0 4px; line-height: 13px; font-size: 6px; }
.tooltip .f1 { margin-top: 3px; padding-top: 2px; border-top: 1px solid #c8c8cc; }
.options { flex: none; height: 17px; line-height: 17px; padding-left: 6px; background: #e3efd6; }

.work { flex: 1; min-height: 0; display: flex; }
.side { flex: none; width: 138px; border-right: 2px solid #d0d0d0; background: #f0f0f0; display: flex; flex-direction: column; }
.props { flex: none; border-bottom: 1px solid #c8c8c8; }
.palhead { height: 14px; display: flex; align-items: center; justify-content: space-between; padding: 0 2px 0 1px; white-space: nowrap; }
.palhead button svg { width: 8px; height: 8px; }
.type { width: 100%; height: 46px; display: flex; align-items: center; gap: 3px; text-align: left; border-top: 1px solid #777; border-bottom: 1px solid #777; padding: 0 2px; line-height: 10px; white-space: nowrap; }
.swatch { width: 41px; height: 40px; flex: none; }
.typename { flex: 1; }
.type .car { width: 8px; height: 8px; flex: none; }
.filter { height: 14px; display: flex; align-items: center; }
.sel { position: relative; display: block; }
.sel select { width: 100%; height: 13px; appearance: none; display: block; padding-left: 2px; background: #e1e1e1; border: 1px solid #ccc; }
.sel svg { position: absolute; right: 2px; top: 3px; width: 8px; height: 8px; pointer-events: none; }
.grow { flex: none; width: 81px; }
.edittype { display: flex; align-items: center; gap: 2px; padding-left: 3px; white-space: nowrap; }
.edittype svg { width: 11px; height: 11px; }
.gridwrap { display: flex; height: 184px; overflow: hidden; }
.grid { flex: none; width: 124px; align-self: flex-start; border-collapse: collapse; table-layout: fixed; background: #fff; line-height: 10px; }
.grid .c1 { width: 58px; }
.grid .c3 { width: 8px; }
.grid th, .grid td { height: 11px; padding: 0 0 0 1px; text-align: left; font-weight: normal; white-space: nowrap; overflow: hidden; border: 1px dotted #c4c4c4; border-width: 0 1px 1px 0; }
.grid th { padding-left: 5px; }
.grid .grp th, .grid .grp td { height: 12px; padding-left: 1px; background: #dcdcdc; border-color: #dcdcdc; }
.grid .grp svg { width: 6px; height: 8px; }
.grid .grp td { padding-left: 0; }
.grid .editing { padding: 0; }
.dim { color: #888; }
.edit-in { display: block; width: 100%; height: 10px; border: 1px solid #444; }
.grid input[type=checkbox] { appearance: none; display: block; width: 9px; height: 9px; margin-left: 2px; border: 1px solid #777; background: #fff; }
.grid input[type=checkbox]:disabled { border-color: #ddd; }
.grid input[type=checkbox]:checked { background: #fff url("data:image/svg+xml,%3Csvg xmlns='http://www.w3.org/2000/svg' viewBox='0 0 7 7'%3E%3Cpath d='M1 3.5l2 2 3.500-4' fill='none' stroke='%23333'/%3E%3C/svg%3E") center / 7px 7px no-repeat; }
.vscroll { flex: none; width: 11px; background: #f0f0f0; display: flex; flex-direction: column; align-items: center; padding: 2px 0; }
.vscroll svg { width: 8px; height: 8px; margin-top: auto; filter: brightness(.5); }
.vscroll .up { margin-top: 0; transform: rotate(180deg); }
.vscroll i { width: 9px; height: 98px; background: #c9c9c9; }
.apply { height: 16px; display: flex; justify-content: space-between; padding: 1px 2px 3px 1px; }
.apply a { color: #1b74c8; white-space: nowrap; }
.apply button { width: 54px; height: 12px; background: #c7c7c7; color: #888; }
.browser { flex: 1; min-height: 0; display: flex; flex-direction: column; }
.browser .palhead { height: 13px; }
.tree { flex: 1; list-style: none; background: #fdfdfd; white-space: nowrap; }
.tree li { display: flex; align-items: center; height: 11px; padding-left: 2px; }
.tree li:nth-child(4n) { height: 12px; }
.tree .ex { width: 6px; height: 6px; flex: none; margin-right: 4px; }
.tree .ti { width: 10px; height: 10px; margin-right: 4px; }
.tree .sub { padding-left: 15px; }
.tree .sub .ex { margin-right: 7px; }
.hot { background: #e6e6e6; }

.view { flex: 1; min-width: 0; display: flex; flex-direction: column; }
.doctabs { flex: none; height: 13px; display: flex; justify-content: space-between; padding-right: 3px; }
.doctab { width: 80px; background: #fff; display: flex; align-items: center; gap: 4px; padding: 0 3px; }
.doctab .di { width: 10px; height: 10px; }
.doctab button { margin-left: auto; }
.doctab button svg { width: 8px; height: 8px; }
.more svg { width: 6px; height: 6px; }
.stage { flex: 1; min-height: 0; display: flex; background: #fff; }
.canvas { flex: 1; min-width: 0; position: relative; }
.drawing { width: 100%; height: 100%; }
.vscroll.main { width: 10px; padding: 3px 0 1px; justify-content: space-between; }
.vscroll.main i { height: 11px; }
.vscroll.main svg { margin: 0; }
.navbar { position: absolute; right: 1px; top: 2px; width: 22px; background: #f4f4f4; border: 1px solid #c2c2c2; border-radius: 3px; display: flex; flex-direction: column; align-items: center; padding: 1px 2px; }
.dot { width: 5px; height: 5px; border: 1px solid #aaa; border-radius: 50%; align-self: flex-end; }
.wheel { width: 16px; height: 16px; margin-top: 5px; }
.nc { width: 6px; height: 6px; opacity: .6; margin-top: 1px; }
.navbar hr { width: 16px; margin: 2px 0 4px; border: 0; border-top: 1px solid #bbb; }
.zoomi { width: 12px; height: 12px; }
.dot.end { margin-top: 5px; }
.viewbar { flex: none; height: 13px; display: flex; align-items: center; background: #f0f0f0; border-bottom: 1px solid #ddd; padding-left: 20px; }
.scale { width: 37px; }
.viewbar button { flex: none; width: 15px; margin-right: 1px; display: flex; justify-content: center; }
.viewbar button:nth-of-type(2n) { margin-right: 0; }
.viewbar button svg { width: 11px; height: 11px; }
.lt { width: 8px; height: 7px; flex: none; }
.hscroll { flex: 1; display: flex; justify-content: center; }
.hscroll i { width: 11px; height: 10px; background: #c9c9c9; }
.grip { width: 8px; height: 8px; margin-left: 4px; }

.status { flex: none; height: 15px; display: flex; align-items: center; background: #c8c8c8; }
.msg { flex: 0 0 47%; white-space: nowrap; }
.si { width: 11px; height: 11px; flex: none; margin: 0 0 0 5px; }
.msg + .si { margin: 0; }
.combo { flex: none; width: 128px; }
.combo + .si { margin-left: 5px; }
.combo select { background: #fff; color: #888; height: 12px; padding-left: 0; }
.combo svg { top: 2px; }
.zero { width: 20px; padding-left: 2px; }
.si + .combo { margin-left: 3px; }
.sicons { margin-left: auto; display: flex; align-items: center; width: 163px; }
.one { margin-left: 1px; }

.markup { position: absolute; left: 0; top: 0; width: 620px; pointer-events: none; z-index: 5; }
.markup p { position: absolute; left: 484px; top: 163px; white-space: nowrap; font-size: 15px; line-height: 20px; color: #e0564b; }
```
